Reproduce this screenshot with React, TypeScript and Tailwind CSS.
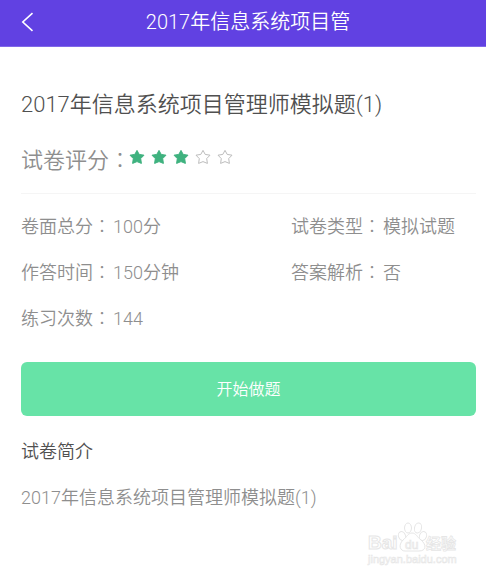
import type { ReactNode } from "react";

const starPath =
  "M8 1.4 L10.2 5.4 L15 6.2 L11.7 9.6 L12.4 14.4 L8 12.6 L3.6 14.4 L4.3 9.6 L1 6.2 L5.8 5.4 Z";

function Star({ filled }: { filled: boolean }) {
  return (
    <svg width="16" height="16" viewBox="0 0 16 16" aria-hidden="true">
      <path
        d={starPath}
        fill={filled ? "#3fb27f" : "#ffffff"}
        stroke={filled ? "#3fb27f" : "#b4b4b4"}
        strokeWidth={filled ? 1 : 0.9}
        strokeLinejoin="round"
      />
    </svg>
  );
}

function Colon() {
  return <span className="font-['Noto_Sans_CJK_JP',sans-serif] leading-none font-light">：</span>;
}

function Field({ label, children }: { label: string; children: ReactNode }) {
  return (
    <div className="flex gap-[2px] whitespace-nowrap">
      <dt>
        {label}
        <Colon />
      </dt>
      <dd>{children}</dd>
    </div>
  );
}

function Watermark() {
  return (
    <svg
      className="absolute right-7 bottom-2 pointer-events-none"
      width="92"
      height="48"
      viewBox="0 0 92 48"
      fill="#ffffff"
      stroke="#e6e6e6"
      strokeWidth="1"
      aria-hidden="true"
    >
      <text x="2" y="29" fontSize="19" fontWeight="bold" fontFamily="Liberation Sans, sans-serif">
        Bai
      </text>
      <ellipse cx="36" cy="16" rx="3.5" ry="4.6" transform="rotate(-20 36 16)" />
      <ellipse cx="42" cy="8" rx="3.5" ry="5" />
      <ellipse cx="52" cy="8" rx="3.5" ry="5" transform="rotate(12 52 8)" />
      <ellipse cx="57" cy="16" rx="3.5" ry="4.6" transform="rotate(20 57 16)" />
      <path d="M46 13 C42 13 41 17 37 20 C32 25 34 31 39 31 H53 C60 31 61 25 55 20 C51 17 50 13 46 13 Z" />
      <text x="39" y="29" fontSize="12" strokeWidth="0.7" fontFamily="Liberation Sans, sans-serif">
        du
      </text>
      <text x="60" y="29" fontSize="15" strokeWidth="0.8" fontWeight="bold" fontFamily="Noto Sans CJK SC, sans-serif">
        经验
      </text>
      <text x="2" y="43" fontSize="11" strokeWidth="0.6" fontFamily="Liberation Sans, sans-serif">
        jingyan.baidu.com
      </text>
    </svg>
  );
}

export default function App() {
  return (
    <div className="relative min-h-screen bg-white font-['Roboto_Light','Roboto','Noto_Sans_CJK_SC_DemiLight','Noto_Sans_CJK_SC',sans-serif] text-[#8e8e8e]">
      <header className="grid h-[47px] grid-cols-[48px_1fr_38px] items-center border-b border-[#8068e8] bg-[#6141e2] pb-[2px] text-white">
        <button type="button" aria-label="返回" className="flex h-full items-center pl-5">
          <svg width="16" height="20" viewBox="0 0 16 20" fill="none" stroke="currentColor" strokeWidth="1.6">
            <path d="M12.5 1.2 L2.8 10 L12.5 18.8" />
          </svg>
        </button>
        <h1 className="text-center text-xl">2017年信息系统项目管</h1>
      </header>

      <main className="pt-10 pr-[10px] pb-9 pl-[21px]">
        <h2 className="text-[22px] leading-9 text-[#505050]">2017年信息系统项目管理师模拟题(1)</h2>
        <div className="mt-5 flex items-start border-b border-[#f5f5f5] pb-[14px] text-[22px] leading-9">
          <span>
            试卷评分
            <Colon />
          </span>
          <div role="img" aria-label="3 / 5" className="-ml-[2px] flex gap-[6px] pt-[6px]">
            {[1, 2, 3, 4, 5].map((n) => (
              <Star key={n} filled={n <= 3} />
            ))}
          </div>
        </div>

        <dl className="mt-[10px] grid grid-cols-[54fr_37fr] text-lg leading-[46px]">
          <Field label="卷面总分">100分</Field>
          <Field label="试卷类型">模拟试题</Field>
          <Field label="作答时间">150分钟</Field>
          <Field label="答案解析">否</Field>
          <Field label="练习次数">144</Field>
        </dl>

        <button type="button" className="mt-5 h-[54px] w-full rounded-md bg-[#67e3a7] pt-[2px] text-base text-white">
          开始做题
        </button>

        <section className="mt-[13px] text-lg leading-[46px]">
          <h3 className="text-[#505050]">试卷简介</h3>
          <p>2017年信息系统项目管理师模拟题(1)</p>
        </section>
      </main>
      <Watermark />
    </div>
  );
}
